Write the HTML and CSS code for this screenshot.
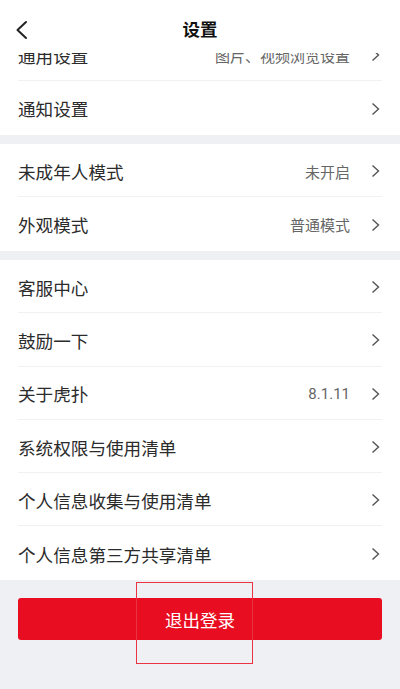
FILE: index.html
```html
<!DOCTYPE html>
<html lang="zh-CN">
<head>
    <meta charset="UTF-8">
    <meta name="viewport" content="width=device-width, initial-scale=1.0">
    <title>设置</title>
    <link rel="stylesheet" href="styles.css">
</head>
<body>
    <header class="top-bar">
        <a class="back" href="#">
            <svg width="14" height="20" viewBox="0 0 14 20"><path d="M11 2 L2.5 10 L11 18" fill="none" stroke="#222" stroke-width="2" stroke-linecap="round" stroke-linejoin="round"/></svg>
        </a>
        <h1>设置</h1>
    </header>

    <main class="scroll">
        <section class="group">
            <div class="row">
                <span class="label">通用设置</span>
                <span class="value">图片、视频浏览设置</span>
                <span class="arrow"><svg width="9" height="14" viewBox="0 0 9 14"><path d="M1.5 1.5 L7.5 7 L1.5 12.5" fill="none" stroke="#555" stroke-width="1.4"/></svg></span>
            </div>
            <div class="row">
                <span class="label">通知设置</span>
                <span class="arrow"><svg width="9" height="14" viewBox="0 0 9 14"><path d="M1.5 1.5 L7.5 7 L1.5 12.5" fill="none" stroke="#555" stroke-width="1.4"/></svg></span>
            </div>
        </section>

        <section class="group">
            <div class="row">
                <span class="label">未成年人模式</span>
                <span class="value">未开启</span>
                <span class="arrow"><svg width="9" height="14" viewBox="0 0 9 14"><path d="M1.5 1.5 L7.5 7 L1.5 12.5" fill="none" stroke="#555" stroke-width="1.4"/></svg></span>
            </div>
            <div class="row">
                <span class="label">外观模式</span>
                <span class="value">普通模式</span>
                <span class="arrow"><svg width="9" height="14" viewBox="0 0 9 14"><path d="M1.5 1.5 L7.5 7 L1.5 12.5" fill="none" stroke="#555" stroke-width="1.4"/></svg></span>
            </div>
        </section>

        <section class="group">
            <div class="row">
                <span class="label">客服中心</span>
                <span class="arrow"><svg width="9" height="14" viewBox="0 0 9 14"><path d="M1.5 1.5 L7.5 7 L1.5 12.5" fill="none" stroke="#555" stroke-width="1.4"/></svg></span>
            </div>
            <div class="row">
                <span class="label">鼓励一下</span>
                <span class="arrow"><svg width="9" height="14" viewBox="0 0 9 14"><path d="M1.5 1.5 L7.5 7 L1.5 12.5" fill="none" stroke="#555" stroke-width="1.4"/></svg></span>
            </div>
            <div class="row">
                <span class="label">关于虎扑</span>
                <span class="value">8.1.11</span>
                <span class="arrow"><svg width="9" height="14" viewBox="0 0 9 14"><path d="M1.5 1.5 L7.5 7 L1.5 12.5" fill="none" stroke="#555" stroke-width="1.4"/></svg></span>
            </div>
            <div class="row">
                <span class="label">系统权限与使用清单</span>
                <span class="arrow"><svg width="9" height="14" viewBox="0 0 9 14"><path d="M1.5 1.5 L7.5 7 L1.5 12.5" fill="none" stroke="#555" stroke-width="1.4"/></svg></span>
            </div>
            <div class="row">
                <span class="label">个人信息收集与使用清单</span>
                <span class="arrow"><svg width="9" height="14" viewBox="0 0 9 14"><path d="M1.5 1.5 L7.5 7 L1.5 12.5" fill="none" stroke="#555" stroke-width="1.4"/></svg></span>
            </div>
            <div class="row">
                <span class="label">个人信息第三方共享清单</span>
                <span class="arrow"><svg width="9" height="14" viewBox="0 0 9 14"><path d="M1.5 1.5 L7.5 7 L1.5 12.5" fill="none" stroke="#555" stroke-width="1.4"/></svg></span>
            </div>
        </section>

        <div class="logout-wrap">
            <button class="logout">退出登录</button>
        </div>
    </main>

    <!-- highlight box drawn over the logout button -->
    <div class="mark"></div>
</body>
</html>
```

FILE: styles.css
```css
* {
    box-sizing: border-box;
}

html, body {
    height: 100%;
}

body {
    margin: 0;
    font-family: Roboto, "Noto Sans CJK SC", sans-serif;
    background-color: #eff0f4;
    color: #333;
    position: relative;
    overflow: hidden;
}

.top-bar {
    position: relative;
    z-index: 2;
    height: 53px;
    background-color: #fff;
    display: flex;
    justify-content: center;
}

.top-bar h1 {
    margin: 22px 0 0;
    font-size: 17.5px;
    font-weight: bold;
    color: #111;
    line-height: 1;
}

.back {
    position: absolute;
    left: 15px;
    top: 20px;
    display: flex;
}

.scroll {
    margin-top: -25px;
    position: relative;
    z-index: 1;
}

.group {
    background-color: #fff;
    padding: 0 18px;
    margin-bottom: 9.4px;
}

.group:last-of-type {
    margin-bottom: 0;
}

.row {
    height: 53.3px;
    display: flex;
    align-items: center;
    border-bottom: 1px solid #f1f1f4;
}

.row:last-child {
    border-bottom: none;
}

.label {
    flex: 1;
    font-size: 17.6px;
    color: #2b2b2b;
    padding-top: 2px;
}

.value {
    font-size: 15px;
    color: #666;
    margin-right: 21px;
    padding-top: 2px;
}

.arrow {
    display: flex;
    margin-right: 2px;
    padding-top: 2px;
}

.logout-wrap {
    padding: 18px 18px 0;
}

.logout {
    display: block;
    width: 100%;
    height: 42.5px;
    border: none;
    border-radius: 3px;
    background-color: #e80d20;
    color: #fff;
    font-family: inherit;
    font-size: 17.5px;
    padding: 0;
}

.mark {
    position: absolute;
    left: 136px;
    top: 582px;
    width: 117px;
    height: 82px;
    border: 1.5px solid #ec3341;
    z-index: 3;
}
```
